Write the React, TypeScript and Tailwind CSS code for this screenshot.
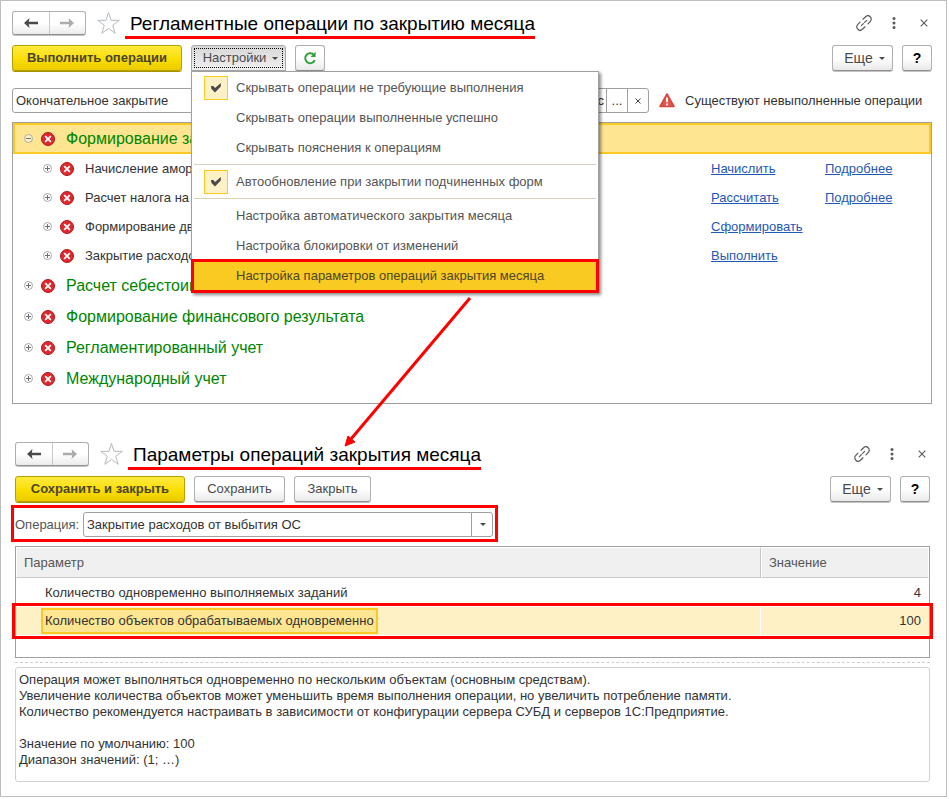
import React from "react";

const operations = [
  { title: "Начисление амортизации", action: "Начислить", details: true },
  { title: "Расчет налога на имущество", action: "Рассчитать", details: true },
  { title: "Формирование движений", action: "Сформировать", details: false },
  { title: "Закрытие расходов", action: "Выполнить", details: false },
];

const groups = [
  "Расчет себестоимости",
  "Формирование финансового результата",
  "Регламентированный учет",
  "Международный учет",
];

const description = `Операция может выполняться одновременно по нескольким объектам (основным средствам).
Увеличение количества объектов может уменьшить время выполнения операции, но увеличить потребление памяти.
Количество рекомендуется настраивать в зависимости от конфигурации сервера СУБД и серверов 1С:Предприятие.

Значение по умолчанию: 100
Диапазон значений: (1; …)`;

const plainButton =
  "flex h-[26px] items-center justify-center rounded-[3px] border border-[#b0b0b0] border-b-[#8f8f8f] bg-linear-to-b from-white from-50% to-[#e9e9e9] text-[#4a4a4a] shadow-[0_1px_0_#c4c4c4]";

const primaryButton =
  "flex h-[26px] w-[170px] items-center justify-center rounded-[3px] border border-[#b5a000] bg-linear-to-b from-[#ffe93a] via-[#fbe000] to-[#eccb00] text-[13px] font-bold text-[#4a4530] shadow-[0_1px_0_#a89400]";

function Arrow({ back }: { back?: boolean }) {
  return (
    <svg width="14" height="10" viewBox="0 0 14 10" className={back ? "text-[#4a4a4a]" : "-scale-x-100 text-[#ababab]"}>
      <path d="M0 5 5.5 0 4.8 3.8H14V6.2H4.8L5.5 10Z" fill="currentColor" />
    </svg>
  );
}

function Caret() {
  return (
    <svg width="6" height="3" viewBox="0 0 6 3">
      <path d="M0 0H6L3 3Z" fill="#4a4a4a" />
    </svg>
  );
}

function Check() {
  return (
    <svg width="10" height="10" viewBox="0 0 10 10">
      <path d="M0 3H2.4L4 5 9.8 0V3.400L4 9.600 0.300 5.800Z" fill="#4a4a4a" />
    </svg>
  );
}

function ErrorIcon() {
  return (
    <svg width="14" height="14" viewBox="0 0 14 14" className="shrink-0">
      <circle cx="7" cy="7" r="6.5" fill="#dc2a2f" stroke="#b3161c" />
      <path d="M4.2 4.2 9.8 9.8M9.8 4.2 4.2 9.8" stroke="#fff" strokeWidth="1.8" />
    </svg>
  );
}

function Toggle({ open }: { open?: boolean }) {
  return (
    <button aria-label={open ? "Свернуть" : "Развернуть"} className="shrink-0">
      <svg width="9" height="9" viewBox="0 0 9 9">
        <circle cx="4.5" cy="4.5" r="4" fill={open ? "#fff3c9" : "#fff"} stroke="#a8a8a8" />
        <path d={open ? "M2 4.5H7" : "M2 4.5H7M4.5 2V7"} stroke="#6e6e6e" />
      </svg>
    </button>
  );
}

function TitleBar({ title }: { title: string }) {
  return (
    <header className="flex h-7 items-start">
      <div className="flex h-6 w-[74px] rounded-[3px] border border-[#b0b0b0] border-b-[#8f8f8f] bg-linear-to-b from-white from-50% to-[#ececec] shadow-[0_1px_0_#c4c4c4]">
        <button aria-label="Назад" className="flex flex-1 items-center justify-center border-r border-[#c8c8c8]">
          <Arrow back />
        </button>
        <button aria-label="Вперед" className="flex flex-1 items-center justify-center">
          <Arrow />
        </button>
      </div>
      <button aria-label="В избранное" className="ml-[11px]">
        <svg width="24" height="24" viewBox="0 0 24 24" fill="none" stroke="#b4bac0">
          <path d="M11.5 1.5 14 9.3H22.3L15.7 14.3 18.2 22.3 11.5 17.4 4.8 22.3 7.3 14.3 0.8 9.3H9Z" />
        </svg>
      </button>
      <h1 className="ml-1 h-7 border-b-[3px] border-[#f00] pl-[5px] text-[19px] leading-[25px] text-black">{title}</h1>
      <div className="ml-auto flex h-6 items-center text-[#5a5a5a]">
        <button aria-label="Ссылка">
          <svg width="16" height="16" viewBox="0 0 16 16" fill="none" stroke="currentColor" strokeWidth="1.2" strokeLinecap="round">
            <path d="M7 4.2 9.6 1.7C10.8.5 12.7.4 13.9 1.5 15.6 3 15.6 5 14.4 6.3L12 8.8" />
            <path d="M9 11.8 6.4 14.3C5.2 15.5 3.3 15.6 2.1 14.5.4 13 .4 11 1.6 9.7L4 7.2" />
            <path d="M5.3 10.7 10.7 5.3" strokeDasharray="3 1.6" />
          </svg>
        </button>
        <button aria-label="Меню" className="ml-5">
          <svg width="4" height="12" viewBox="0 0 4 12" fill="currentColor">
            <circle cx="2" cy="1.6" r="1.5" />
            <circle cx="2" cy="6" r="1.5" />
            <circle cx="2" cy="10.4" r="1.5" />
          </svg>
        </button>
        <button aria-label="Закрыть окно" className="mr-1 ml-6">
          <svg width="8" height="8" viewBox="0 0 8 8" stroke="currentColor" strokeWidth="1.1">
            <path d="M.7.7 7.3 7.3M7.3.7.7 7.3" />
          </svg>
        </button>
      </div>
    </header>
  );
}

function MoreButtons() {
  return (
    <div className="ml-auto flex gap-[9px]">
      <button className={`${plainButton} w-[61px] gap-1.5 pl-1 text-sm`}>
        Еще <Caret />
      </button>
      <button className={`${plainButton} w-[30px] text-sm font-bold text-black`}>?</button>
    </div>
  );
}

function MenuItem({ label, checked }: { label: string; checked?: boolean }) {
  return (
    <button role="menuitem" className="flex h-[30px] w-full items-center pl-3 text-left">
      <span
        className={
          checked
            ? "flex size-6 items-center justify-center border border-[#f9cb22] bg-[#fef1c6]"
            : "size-6"
        }
      >
        {checked && <Check />}
      </span>
      <span className="ml-2">{label}</span>
    </button>
  );
}

function SettingsMenu() {
  return (
    <div
      role="menu"
      className="absolute top-full left-0 z-10 w-[408px] border border-[#a0a0a0] bg-white pt-px text-[13px] whitespace-nowrap text-[#555] shadow-[2px_2px_3px_rgba(0,0,0,0.45)]"
    >
      <MenuItem label="Скрывать операции не требующие выполнения" checked />
      <MenuItem label="Скрывать операции выполненные успешно" />
      <MenuItem label="Скрывать пояснения к операциям" />
      <hr className="mx-0.5 mt-px mb-0.5 border-[#d8d2bd]" />
      <MenuItem label="Автообновление при закрытии подчиненных форм" checked />
      <hr className="mx-0.5 mt-px mb-0.5 border-[#d8d2bd]" />
      <MenuItem label="Настройка автоматического закрытия месяца" />
      <MenuItem label="Настройка блокировки от изменений" />
      <button
        role="menuitem"
        className="-mx-px -mt-0.5 -mb-px flex h-[34px] w-[408px] items-center border-[3px] border-[#f00] bg-[#f9cb22] pl-[42px] text-left text-[#4f4527]"
      >
        Настройка параметров операций закрытия месяца
      </button>
    </div>
  );
}

function ClosingWindow() {
  return (
    <section className="pt-2.5 pr-3.5 pl-[11px]">
      <TitleBar title="Регламентные операции по закрытию месяца" />

      <div className="mt-1.5 flex gap-[9px]">
        <button className={primaryButton}>Выполнить операции</button>
        <div className="relative">
          <button
            aria-haspopup="menu"
            aria-expanded="true"
            className="h-[26px] w-[95px] rounded-t-[3px] border border-[#a8a8a8] bg-linear-to-b from-[#d8d8d8] to-[#efefef] p-0.5 text-[13px] text-[#4a4a4a]"
          >
            <span className="flex h-full items-center justify-center gap-1.5 border border-dotted border-black pl-1">
              Настройки <Caret />
            </span>
          </button>
          <SettingsMenu />
        </div>
        <button aria-label="Обновить" className={`${plainButton} w-[30px]`}>
          <svg width="14" height="14" viewBox="0 0 14 14" fill="none">
            <path d="M11.8 9.2A5 5 0 1 1 10.4 3.3" stroke="#33a23d" strokeWidth="2" />
            <path d="M12.6.8V6H7.4Z" fill="#33a23d" />
          </svg>
        </button>
        <MoreButtons />
      </div>

      <div className="mt-[17px] flex items-center text-[13px] text-[#333]">
        <input
          aria-label="Режим закрытия"
          defaultValue="Окончательное закрытие"
          className="h-[25px] w-[200px] rounded-[3px] border border-[#a0a0a0] px-[3px]"
        />
        <div className="ml-[37px] flex h-[25px] w-[400px] rounded-[3px] border border-[#a0a0a0]">
          <input aria-label="Организация" defaultValue="с" className="min-w-0 flex-1 pr-[2px] text-right" />
          <button aria-label="Выбрать" className="w-[21px] border-l border-[#a0a0a0]">...</button>
          <button aria-label="Очистить" className="flex w-[21px] items-center justify-center border-l border-[#a0a0a0]">
            <svg width="6" height="6" viewBox="0 0 6 6" stroke="#444">
              <path d="M.5.5 5.5 5.5M5.5.5.5 5.5" />
            </svg>
          </button>
        </div>
        <svg width="16" height="15" viewBox="0 0 16 15" className="ml-2.5 shrink-0">
          <path d="M8 1 15 13.5H1Z" fill="#e2564b" stroke="#d8473d" strokeWidth="1.6" strokeLinejoin="round" />
          <path d="M8 4.5V9.2M8 10.6V12.4" stroke="#fff" strokeWidth="1.8" />
        </svg>
        <span className="ml-2.5 whitespace-nowrap">Существуют невыполненные операции</span>
      </div>

      <ul className="mt-[9px] border border-[#a0a0a0] pb-[9px] text-base text-[#008500]">
        <li>
          <div className="flex h-[31px] items-center border-2 border-[#f9cb22] bg-[#fee592] pl-[9px]">
            <Toggle open />
            <span className="ml-2 flex items-center gap-[11px]">
              <ErrorIcon />
              Формирование за
            </span>
          </div>
          <ul className="text-[13px] text-[#333]">
            {operations.map((item) => (
              <li key={item.title} className="flex h-[29px] items-center pl-[30px]">
                <Toggle />
                <span className="ml-2 flex flex-1 items-center gap-[11px]">
                  <ErrorIcon />
                  {item.title}
                </span>
                <a href="#" className="w-[114px] text-[#1f57b5] underline">
                  {item.action}
                </a>
                <span className="w-[106px]">
                  {item.details && (
                    <a href="#" className="text-[#1f57b5] underline">
                      Подробнее
                    </a>
                  )}
                </span>
              </li>
            ))}
          </ul>
        </li>
        {groups.map((title) => (
          <li key={title} className="flex h-[31px] items-center pl-[11px]">
            <Toggle />
            <span className="ml-2 flex items-center gap-[11px]">
              <ErrorIcon />
              {title}
            </span>
          </li>
        ))}
      </ul>
    </section>
  );
}

function ParametersWindow() {
  return (
    <section className="pt-[38px] pr-4 pb-3.5 pl-3.5">
      <TitleBar title="Параметры операций закрытия месяца" />

      <div className="mt-1.5 flex gap-[9px]">
        <button className={primaryButton}>Сохранить и закрыть</button>
        <button className={`${plainButton} w-[91px] text-[13px]`}>Сохранить</button>
        <button className={`${plainButton} w-[77px] text-[13px]`}>Закрыть</button>
        <MoreButtons />
      </div>

      <div className="mt-[3px] -ml-1 flex w-[487px] items-center border-[3px] border-[#f00] pt-1 pr-0.5 pb-0.5 pl-px text-[13px]">
        <label htmlFor="operation" className="w-[68px] text-[#555]">
          Операция:
        </label>
        <div className="relative flex-1">
          <select
            id="operation"
            className="block h-[25px] w-full appearance-none rounded-[3px] border border-[#a0a0a0] bg-white px-[3px] text-[#333]"
          >
            <option>Закрытие расходов от выбытия ОС</option>
          </select>
          <span className="pointer-events-none absolute inset-y-0 right-0 flex w-[22px] items-center justify-center border-l border-[#a0a0a0]">
            <Caret />
          </span>
        </div>
      </div>

      <div className="mt-1 border border-[#a0a0a0] pb-[22px]">
        <table className="w-full border-separate border-spacing-0 text-[13px] text-[#333]">
          <thead>
            <tr className="h-[31px] text-left text-[#555]">
              <th className="border border-white border-r-[#c8c8c8] border-b-[#c8c8c8] bg-[#f0f0f0] pl-[7px] font-normal">Параметр</th>
              <th className="w-[168px] border border-white border-b-[#c8c8c8] bg-[#f0f0f0] pl-[7px] font-normal">Значение</th>
            </tr>
          </thead>
          <tbody>
            <tr className="h-[29px]">
              <td className="pl-[29px]">Количество одновременно выполняемых заданий</td>
              <td className="pr-2 text-right">4</td>
            </tr>
            <tr className="h-7 bg-[#fef1c6] outline-3 outline-offset-1 outline-[#f00]">
              <td className="border-r border-white pl-[25px]">
                <span className="inline-flex h-[26px] items-center border-2 border-[#f9cb22] bg-[#fee592] px-0.5 align-middle">
                  Количество объектов обрабатываемых одновременно
                </span>
              </td>
              <td className="pr-2 text-right">100</td>
            </tr>
          </tbody>
        </table>
      </div>

      <hr className="mt-1 border-dashed border-[#cfcfcf]" />
      <textarea
        aria-label="Описание"
        readOnly
        rows={7}
        value={description}
        className="mt-1 block h-[115px] w-full resize-none rounded-[3px] border border-[#d0d0d0] px-[3px] pt-1 text-[13px] leading-4 text-[#333]"
      />
    </section>
  );
}

export default function App() {
  return (
    <div className="relative mr-0.5 border border-[#bdbdbd] bg-white font-['Liberation_Sans',Arial,sans-serif]">
      <ClosingWindow />
      <ParametersWindow />

      {/* callout from the menu entry to the form it opens */}
      <svg width="132" height="152" viewBox="0 0 132 152" className="pointer-events-none absolute top-[295px] left-[342px] z-20">
        <path d="M127 2 8 143" stroke="#f00" strokeWidth="3" />
        <path d="M2 150 5 140 12 146Z" fill="#f00" stroke="#f00" />
      </svg>
    </div>
  );
}
